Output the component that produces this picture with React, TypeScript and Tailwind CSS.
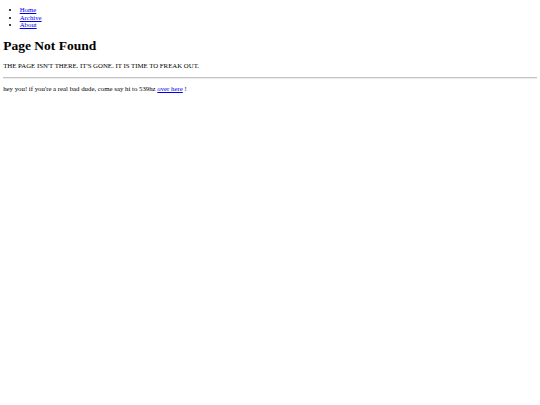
export default function App() {
  return (
    <div className="m-[3.2px] font-['Liberation_Serif',serif] text-[6.8px] leading-[7.5px] text-black">
      <ul className="mt-[6.4px] mb-0 list-disc pl-[16.5px]">
        <li>
          <a href="#" className="text-[#0000ee] underline">Home</a>
        </li>
        <li>
          <a href="#" className="text-[#0000ee] underline">Archive</a>
        </li>
        <li>
          <a href="#" className="text-[#0000ee] underline">About</a>
        </li>
      </ul>
      <h1 className="mt-[10.4px] mb-[8.4px] text-[13.5px] leading-[14.7px] font-bold">Page Not Found</h1>
      <p className="mt-[6.4px] mb-[7.4px]">THE PAGE ISN'T THERE. IT'S GONE. IT IS TIME TO FREAK OUT.</p>
      <hr className="my-[3.6px] border-t border-b border-t-[#c4c4c4] border-b-[#ececec]" />
      <p className="mt-[5.4px] mb-[6.4px]">
        hey you! if you're a real bad dude, come say hi to 539hz{' '}
        <a href="#" className="text-[#0000ee] underline">over here</a> !
      </p>
    </div>
  );
}
